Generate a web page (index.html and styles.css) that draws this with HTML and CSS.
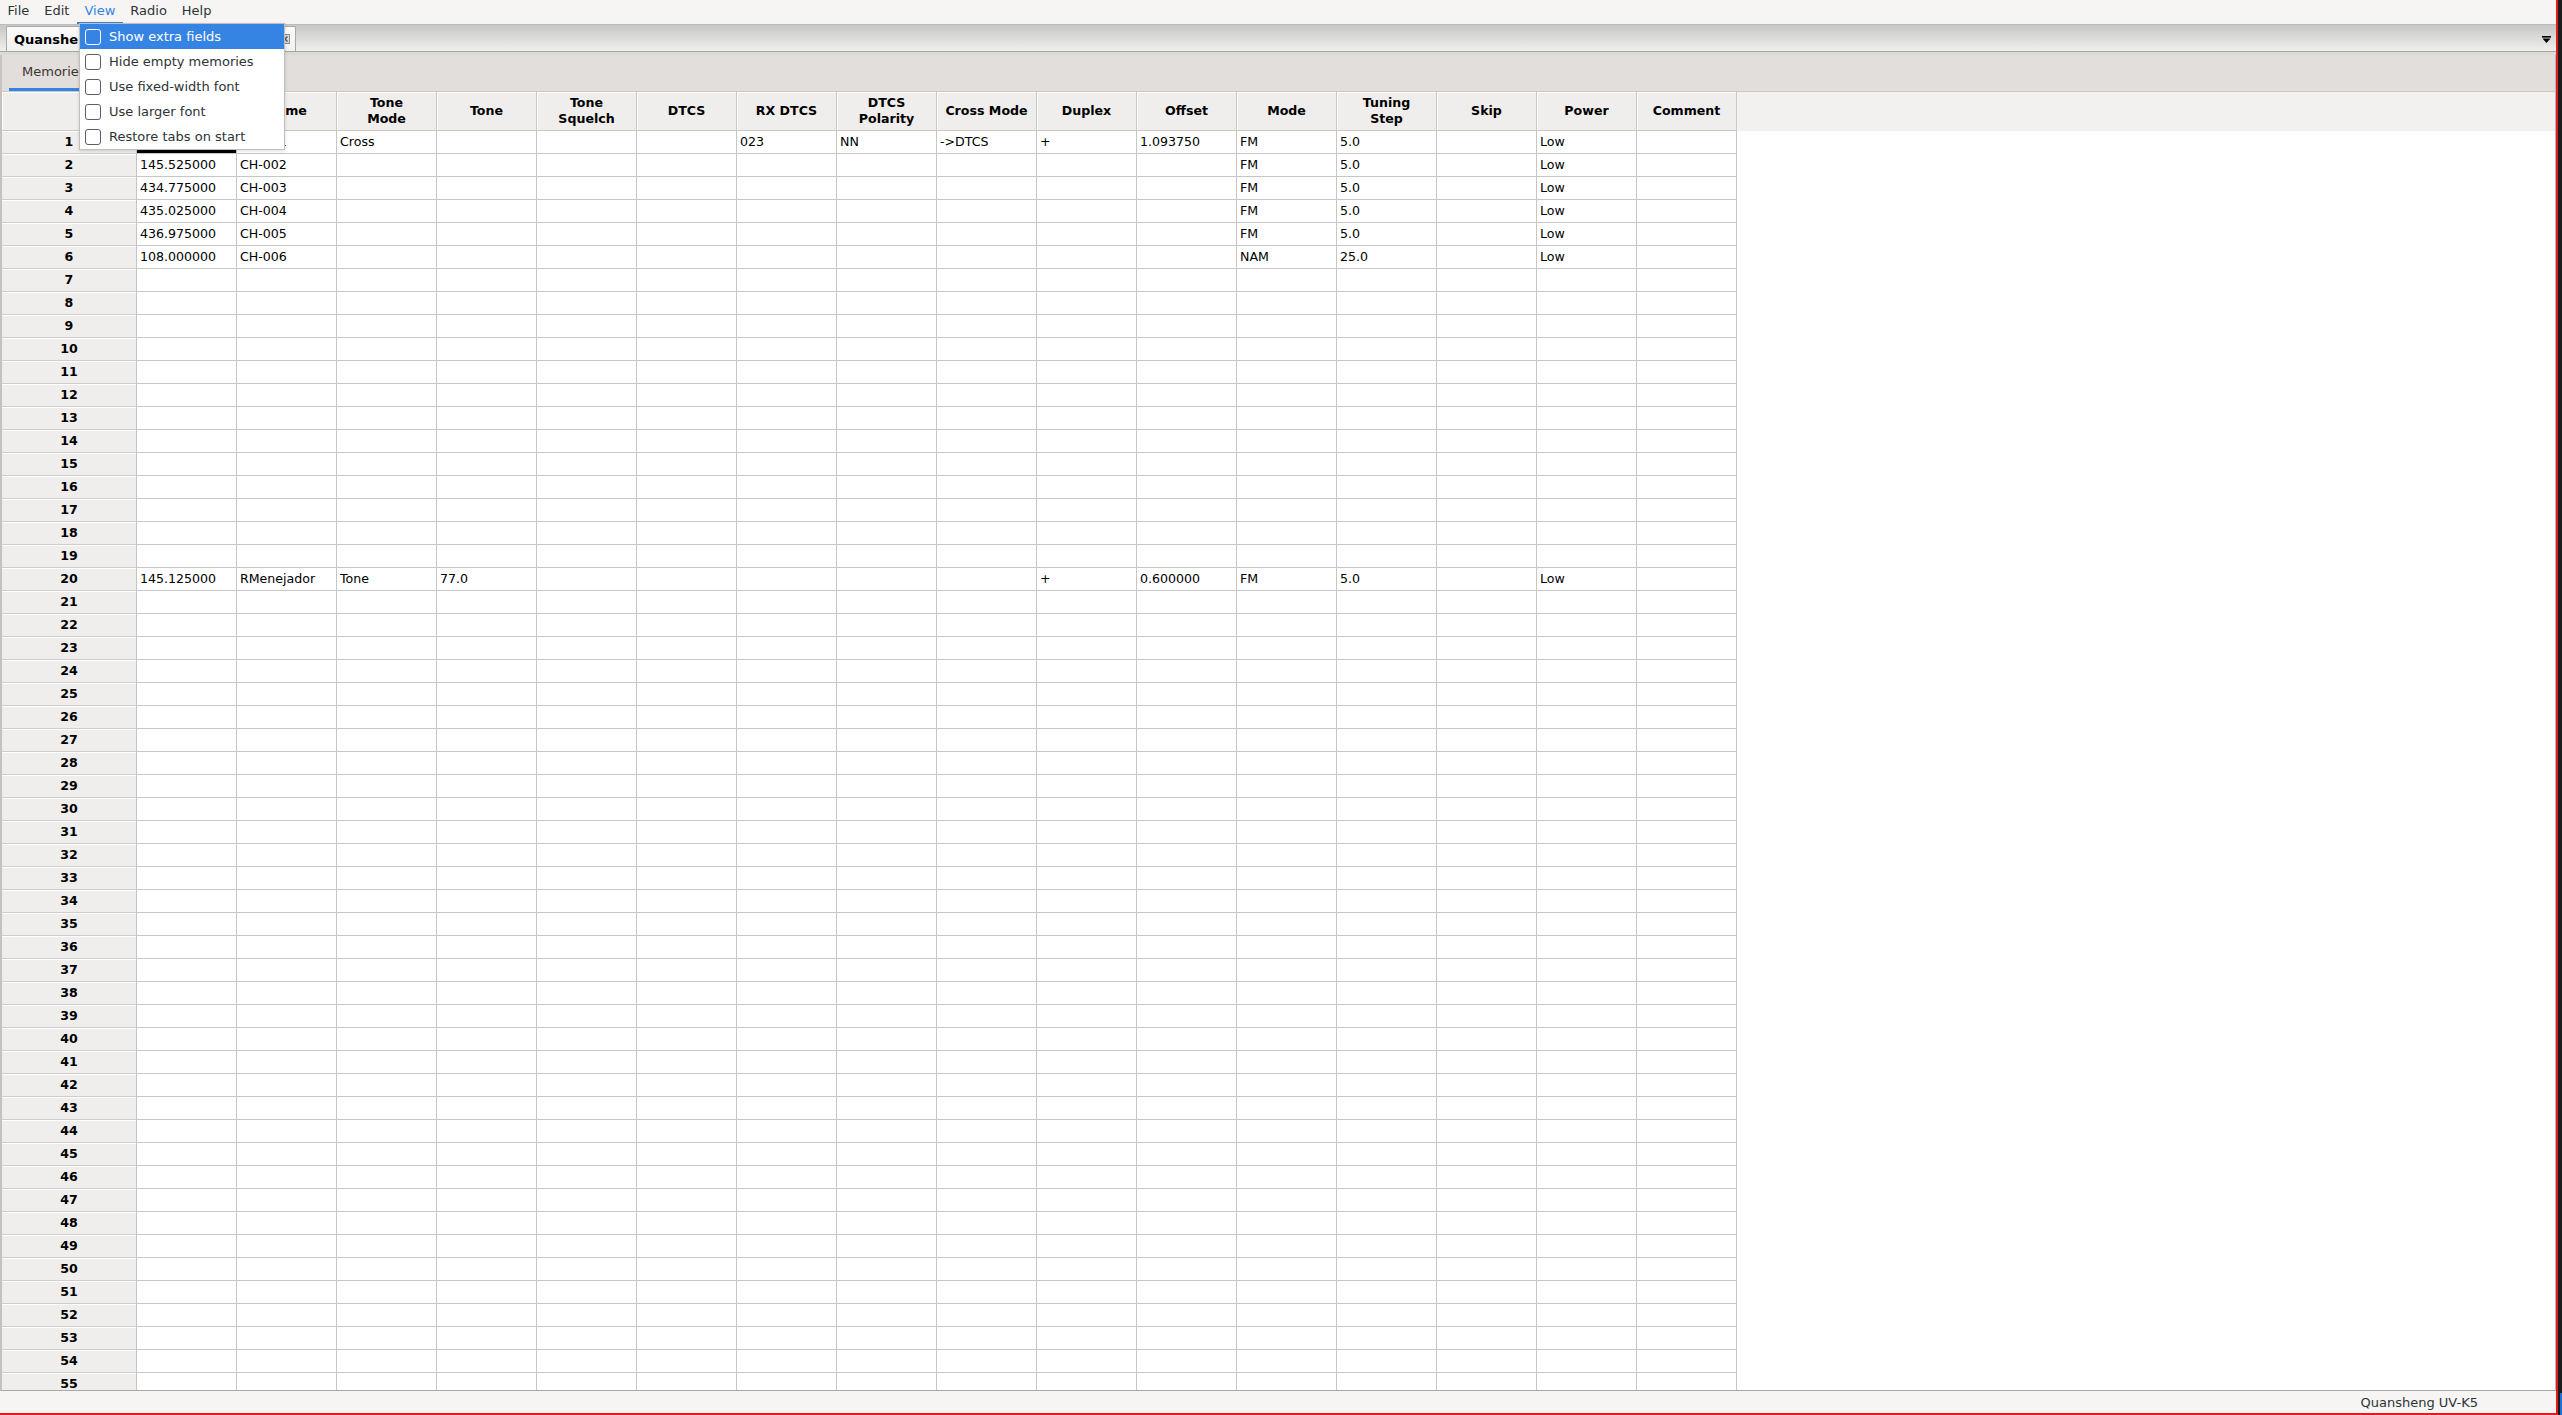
FILE: index.html
```html
<!DOCTYPE html>
<html lang="en">
<head>
  <meta charset="UTF-8" />
  <title>CHIRP</title>
  <link rel="stylesheet" href="styles.css">
</head>
<body>

  <div class="window">
    <div class="menubar">
      <span class="menu-item">File</span>
      <span class="menu-item">Edit</span>
      <span class="menu-item open">View</span>
      <span class="menu-item">Radio</span>
      <span class="menu-item">Help</span>
    </div>

    <div class="file-tabs">
      <div class="file-tab">
        <span class="file-tab-label">Quansheng UV-K5: Untitled.img</span>
        <svg class="tab-close" width="10" height="10" viewBox="0 0 10 10">
          <rect x="0.5" y="0.5" width="9" height="9" fill="#d8d8d8" stroke="#8a8a8a" />
          <path d="M2.5 2.5 L7.5 7.5 M7.5 2.5 L2.5 7.5" stroke="#555" stroke-width="1.4" />
        </svg>
      </div>
      <svg class="tabs-arrow" width="9" height="8" viewBox="0 0 9 8">
        <rect x="0" y="0" width="9" height="1.6" fill="#000" />
        <path d="M0.5 2.6 H8.5 L4.5 7 Z" fill="#000" />
      </svg>
    </div>

    <div class="notebook">
      <div class="page-tabs">
        <div class="page-tab active">Memories</div>
      </div>
      <div class="grid-wrap">
        <table class="grid">
          <thead>
            <tr>
              <th class="corner"></th>
              <th>Frequency</th><th>Name</th><th>Tone<br>Mode</th><th>Tone</th>
              <th>Tone<br>Squelch</th><th>DTCS</th><th>RX DTCS</th><th>DTCS<br>Polarity</th>
              <th>Cross Mode</th><th>Duplex</th><th>Offset</th><th>Mode</th>
              <th>Tuning<br>Step</th><th>Skip</th><th>Power</th><th>Comment</th>
            </tr>
          </thead>
          <tbody id="memories"></tbody>
        </table>
      </div>
    </div>

    <div class="statusbar">
      <span>Quansheng UV-K5</span>
    </div>

    <div class="view-menu">
      <div class="check-item hover"><span class="check"></span>Show extra fields</div>
      <div class="check-item"><span class="check"></span>Hide empty memories</div>
      <div class="check-item"><span class="check"></span>Use fixed-width font</div>
      <div class="check-item"><span class="check"></span>Use larger font</div>
      <div class="check-item"><span class="check"></span>Restore tabs on start</div>
    </div>
  </div>

  <div class="desktop-edge"><div class="edge-blue"></div></div>

  <script>
    const memories = {
      1: ['145.500000', 'CH-001', 'Cross', '', '', '', '023', 'NN', '->DTCS', '+', '1.093750', 'FM', '5.0', '', 'Low', ''],
      2: ['145.525000', 'CH-002', '', '', '', '', '', '', '', '', '', 'FM', '5.0', '', 'Low', ''],
      3: ['434.775000', 'CH-003', '', '', '', '', '', '', '', '', '', 'FM', '5.0', '', 'Low', ''],
      4: ['435.025000', 'CH-004', '', '', '', '', '', '', '', '', '', 'FM', '5.0', '', 'Low', ''],
      5: ['436.975000', 'CH-005', '', '', '', '', '', '', '', '', '', 'FM', '5.0', '', 'Low', ''],
      6: ['108.000000', 'CH-006', '', '', '', '', '', '', '', '', '', 'NAM', '25.0', '', 'Low', ''],
      20: ['145.125000', 'RMenejador', 'Tone', '77.0', '', '', '', '', '', '+', '0.600000', 'FM', '5.0', '', 'Low', '']
    };

    const body = document.getElementById('memories');
    let html = '';
    for (let n = 1; n <= 56; n++) {
      const cells = memories[n] || new Array(16).fill('');
      html += `<tr><th class="rownum">${n}</th>`;
      cells.forEach((c, i) => {
        const cls = (n === 1 && i === 0) ? ' class="focus"' : '';
        html += `<td${cls}>${c.replace('>', '&gt;')}</td>`;
      });
      html += '</tr>';
    }
    body.innerHTML = html;
  </script>
</body>
</html>
```

FILE: styles.css
```css
html, body {
  margin: 0;
  padding: 0;
}

body {
  width: 2562px;
  height: 1415px;
  display: flex;
  background: #1b1b1b;
  font-family: "DejaVu Sans", "Noto Sans", sans-serif;
  font-size: 13px;
  color: #2e3436;
  overflow: hidden;
}

.window {
  position: relative;
  width: 2556px;
  height: 1413px;
  border-right: 2px solid #e01b24;
  border-bottom: 2px solid #e01b24;
  background: #f6f5f4;
  display: flex;
  flex-direction: column;
}

.desktop-edge {
  width: 4px;
  display: flex;
  flex-direction: column;
  justify-content: flex-end;
}

.edge-blue {
  height: 22px;
  margin-left: 2px;
  background: #1c71d8;
}

/* menu bar */
.menubar {
  height: 24px;
  display: flex;
  align-items: center;
  background: #f6f5f4;
}

.menu-item {
  position: relative;
  height: 24px;
  line-height: 22px;
  padding: 0 7.5px;
  box-sizing: border-box;
}

.menu-item.open {
  color: #3584e4;
  border-bottom: 2px solid #3584e4;
}

/* radio file tabs */
.file-tabs {
  height: 28px;
  box-sizing: border-box;
  border-top: 1px solid #bdbcba;
  border-bottom: 1px solid #a6a6a6;
  background: linear-gradient(#c7c7c6, #efefee);
  display: flex;
  align-items: flex-end;
  padding-left: 6px;
}

.file-tab {
  width: 290px;
  height: 25px;
  box-sizing: border-box;
  border: 1px solid #a9a9a9;
  border-bottom: none;
  border-radius: 2px 2px 0 0;
  background: linear-gradient(#fbfbfb, #f1f1f0);
  display: flex;
  align-items: center;
  padding: 0 5px 0 7px;
  gap: 6px;
}

.file-tab-label {
  flex: 1;
  font-weight: bold;
  color: #000;
  white-space: nowrap;
  overflow: hidden;
}

.tabs-arrow {
  margin-left: auto;
  margin-right: 5px;
  align-self: center;
  margin-top: 4px;
}

/* notebook */
.notebook {
  flex: 1;
  display: flex;
  flex-direction: column;
  border-top: 3px solid #dcdad7;
  min-height: 0;
}

.page-tabs {
  height: 37px;
  box-sizing: border-box;
  background: #e1dedb;
  border-left: 2px solid #c8c4bf;
  border-right: 1px solid #b9b6b2;
  border-bottom: 1px solid #cdc7c2;
  display: flex;
  padding-left: 7px;
}

.page-tab {
  padding: 0 13px;
  line-height: 33px;
  color: #3d3530;
}

.page-tab.active {
  border-bottom: 3px solid #3584e4;
}

.grid-wrap {
  flex: 1;
  min-height: 0;
  overflow: hidden;
  border-left: 2px solid #c5c1bc;
  border-right: 1px solid #b8b5b2;
  border-bottom: 1px solid #aaa8a6;
  background: linear-gradient(#f2f1f0, #f2f1f0) top / 100% 39px no-repeat, #fff;
}

.grid {
  table-layout: fixed;
  width: 1735px;
  border-collapse: separate;
  border-spacing: 0;
  font-size: 12.6px;
  color: #000;
}

.grid th, .grid td {
  box-sizing: border-box;
  width: 100px;
  padding: 0 3px;
  white-space: nowrap;
  overflow: hidden;
}

.grid thead th {
  height: 39px;
  line-height: 16.5px;
  background: #efeeec;
  border-right: 1px solid #cac7c4;
  border-bottom: 1px solid #cac7c4;
  box-shadow: inset 1px 1px #fff;
  text-align: center;
  font-weight: bold;
}

.grid th.corner {
  width: 135px;
}

.grid td {
  height: 23px;
  line-height: 22px;
  background: #fff;
  border-right: 1px solid #c6c6c6;
  border-bottom: 1px solid #c6c6c6;
  text-align: left;
}

.grid th.rownum {
  height: 23px;
  line-height: 22px;
  background: #efeeec;
  border-right: 1px solid #c6c3c0;
  border-bottom: 1px solid #cfccc9;
  box-shadow: inset 0 1px #fff;
  text-align: center;
  font-weight: bold;
}

.grid td.focus {
  box-shadow: inset 0 0 0 3px #000;
}

/* status bar */
.statusbar {
  height: 22px;
  box-sizing: border-box;
  background: #f6f5f4;
  display: flex;
  justify-content: flex-end;
  align-items: center;
  padding-right: 78px;
}

/* open View menu */
.view-menu {
  position: absolute;
  left: 79px;
  top: 23px;
  width: 204px;
  background: #fff;
  border: 1px solid #c0bfbc;
  box-shadow: 0 1px 3px rgba(0, 0, 0, 0.15);
  z-index: 10;
}

.check-item {
  height: 25px;
  display: flex;
  align-items: center;
  padding-left: 5px;
  gap: 8px;
  color: #2e3436;
  white-space: nowrap;
}

.check-item.hover {
  background: #3584e4;
  color: #fff;
}

.check {
  width: 16px;
  height: 16px;
  box-sizing: border-box;
  border: 1px solid #5e5c64;
  border-radius: 3px;
}

.check-item.hover .check {
  border-color: #fff;
}
```
